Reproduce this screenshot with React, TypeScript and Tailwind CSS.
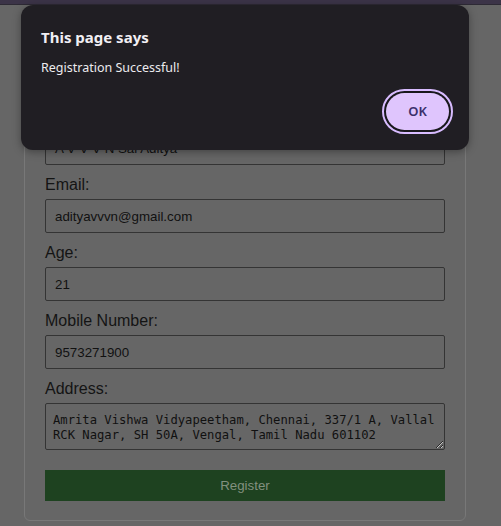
import React from "react";

const Field = ({ label, value }: { label: string; value: string }) => (
  <>
    <label className="block mt-[10px] mb-[5px] h-[19px] leading-[19px] text-[16px] text-[#141414]">{label}</label>
    <div className="h-[34px] w-[400px] border border-[#343434] rounded-[2px] pl-[9px] pt-[1px] flex items-center text-[13.333px] text-[#111]">
      {value}
    </div>
  </>
);

export default function App() {
  return (
    <div className="relative w-[501px] h-[526px] bg-[#666666] overflow-hidden" style={{ fontFamily: '"Liberation Sans", Arial, sans-serif' }}>
      <div className="h-[4px] bg-[#3c3448]" />
      <div className="h-[1px] bg-[#2e2a35]" />
      <div className="pt-[15px]">
        <div className="ml-[24px] w-[442px] border border-[#787878] rounded-[6px] px-[20px] pt-[20px] pb-[19px]">
          <div className="h-[56px]" />
          <Field label="Name:" value="A V V V N Sai Aditya" />
          <Field label="Email:" value="adityavvvn@gmail.com" />
          <Field label="Age:" value="21" />
          <Field label="Mobile Number:" value="9573271900" />
          <label className="block mt-[10px] mb-[5px] h-[19px] leading-[19px] text-[16px] text-[#141414]">Address:</label>
          <textarea
            readOnly
            className="block w-[400px] h-[47px] border border-[#343434] rounded-[2px] bg-transparent pl-[7px] pr-[4px] pt-[9px] text-[12.2px] leading-[15px] text-[#111] outline-none overflow-hidden"
            style={{ fontFamily: '"DejaVu Sans Mono", "Liberation Mono", monospace' }}
            defaultValue={"Amrita Vishwa Vidyapeetham, Chennai, 337/1 A, Vallal RCK Nagar, SH 50A, Vengal, Tamil Nadu 601102"}
          />
          <div className="mt-[20px] h-[31px] w-[400px] bg-[#1e4220] flex items-center justify-center text-[13.333px] text-[#82907f]">
            Register
          </div>
        </div>
      </div>

      <div
        className="absolute left-[21px] top-[5px] w-[448px] h-[145px] rounded-[12px] bg-[#201e23] shadow-[0_2px_8px_rgba(0,0,0,0.35)]"
        style={{ fontFamily: '"Noto Sans", "Open Sans", sans-serif' }}
      >
        <div className="absolute left-[20px] top-[21px] text-[15px] font-bold leading-[22px] text-[#f1eff4]">This page says</div>
        <div className="absolute left-[20px] top-[54px] text-[12.5px] leading-[18px] text-[#ecebee]">Registration Successful!</div>
        <div className="absolute left-[361px] top-[84px] w-[71px] h-[45px] rounded-full border-2 border-[#d8bcff] p-[2px] bg-[#19181c]">
          <div className="w-full h-full rounded-full bg-[#dfc5fd] flex items-center justify-center text-[13px] font-semibold text-[#3a2f6a]">
            OK
          </div>
        </div>
      </div>
    </div>
  );
}
